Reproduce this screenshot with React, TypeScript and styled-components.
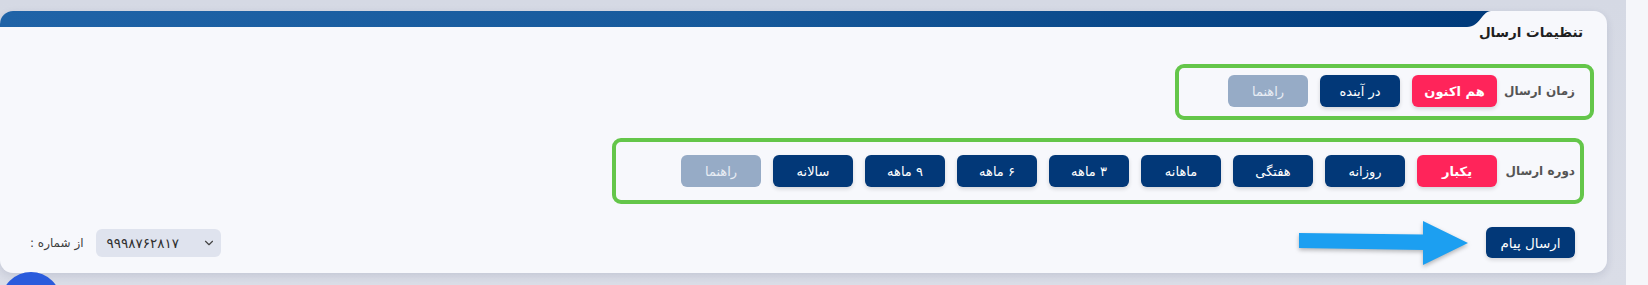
import React from "react";
import styled, { createGlobalStyle } from "styled-components";
import { ChevronDown } from "lucide-react";

const Global = createGlobalStyle`
  html, body {
    margin: 0;
    padding: 0;
    width: 1648px;
    height: 285px;
    overflow: hidden;
    background: #d8dbe5;
    font-family: "DejaVu Sans", "Noto Sans", sans-serif;
  }
  * { box-sizing: border-box; }
`;

const Page = styled.div`
  display: flex;
  width: 1648px;
  height: 285px;
  position: relative;
  overflow: hidden;
`;

const Main = styled.div`
  flex: 1;
  padding: 11px 19px 0 0;
  background: linear-gradient(180deg, #d5d9e4 0%, #dadde7 100%);
`;

const SideStrip = styled.div`
  width: 22px;
  background: #f5f6fa;
`;

const Card = styled.section`
  width: 1607px;
  height: 262px;
  background: #f7f8fc;
  border-radius: 13px;
  overflow: hidden;
  box-shadow: 0 3px 8px rgba(30, 40, 80, 0.12);
  display: flex;
  flex-direction: column;
  direction: rtl;
`;

const Header = styled.div`
  direction: ltr;
  display: flex;
  height: 16px;
`;

const HeaderBar = styled.div`
  flex: 1;
  background: linear-gradient(90deg, #1f63a7 0%, #175a9c 50%, #003b7c 100%);
`;

const HeaderTab = styled.div`
  width: 116px;
`;

const Title = styled.h2`
  margin: -2px 0 0;
  padding-right: 24px;
  font-size: 13.5px;
  line-height: 14px;
  font-weight: 700;
  color: #1f1f1f;
`;

const Highlight = styled.div<{ $w: number; $right: number; $pt: number; $pb: number; $pr: number }>`
  width: ${(p) => p.$w}px;
  margin-right: ${(p) => p.$right}px;
  padding: ${(p) => p.$pt}px ${(p) => p.$pr}px ${(p) => p.$pb}px 0;
  border: 4px solid #64c64a;
  border-radius: 9px;
  display: flex;
  align-items: center;
  gap: 12px;
`;

const Label = styled.span`
  width: 66px;
  flex-shrink: 0;
  white-space: nowrap;
  font-size: 12px;
  font-weight: 700;
  color: #555555;
`;

const Btn = styled.button<{ $kind: "primary" | "active" | "muted"; $w?: number }>`
  width: ${(p) => p.$w ?? 80}px;
  height: 32px;
  border: none;
  border-radius: 6px;
  padding: 0;
  font-family: inherit;
  font-size: 13px;
  font-weight: ${(p) => (p.$kind === "active" ? 700 : 400)};
  color: ${(p) => (p.$kind === "muted" ? "#e8edf4" : "#ffffff")};
  background: ${(p) =>
    p.$kind === "active" ? "#ff245a" : p.$kind === "muted" ? "#96abc6" : "#023878"};
  box-shadow: ${(p) => (p.$kind === "muted" ? "none" : "0 2px 4px rgba(0, 0, 0, 0.14)")};
  direction: rtl;
`;

const Row1 = styled.div`
  margin-top: 25px;
`;

const Row2 = styled.div`
  margin-top: 18px;
`;

const BottomRow = styled.div`
  margin-top: 23px;
  padding: 0 32px 0 30px;
  display: flex;
  align-items: center;
  justify-content: space-between;
`;

const SendGroup = styled.div`
  position: relative;
  display: flex;
`;

const SendBtn = styled(Btn)`
  height: 31px;
  font-size: 13.5px;
`;

const Arrow = styled.svg`
  position: absolute;
  right: calc(100% + 13px);
  top: -9px;
  filter: drop-shadow(0 2px 2px rgba(0, 0, 0, 0.28));
`;

const FromGroup = styled.div`
  direction: ltr;
  display: flex;
  align-items: center;
  gap: 12px;
`;

const FromLabel = styled.span`
  direction: rtl;
  white-space: nowrap;
  font-size: 12px;
  color: #3e3e3e;
`;

const Select = styled.div`
  width: 125px;
  height: 28px;
  border-radius: 6px;
  background: #dfe3ee;
  display: flex;
  align-items: center;
  justify-content: space-between;
  padding: 0 5px 0 11px;
  font-size: 13.5px;
  color: #2f2f2f;
`;

const Fab = styled.div`
  position: absolute;
  left: 1px;
  top: 272px;
  width: 60px;
  height: 60px;
  border-radius: 50%;
  background: #2a5bdc;
`;

const timeOptions = [
  { t: "هم اکنون", k: "active" as const },
  { t: "در آینده", k: "primary" as const },
  { t: "راهنما", k: "muted" as const },
];

const periodOptions = [
  { t: "یکبار", k: "active" as const },
  { t: "روزانه", k: "primary" as const },
  { t: "هفتگی", k: "primary" as const },
  { t: "ماهانه", k: "primary" as const },
  { t: "۳ ماهه", k: "primary" as const },
  { t: "۶ ماهه", k: "primary" as const },
  { t: "۹ ماهه", k: "primary" as const },
  { t: "سالانه", k: "primary" as const },
  { t: "راهنما", k: "muted" as const },
];

export default function App() {
  return (
    <>
      <Global />
      <Page>
        <Main>
          <Card>
            <Header>
              <HeaderBar />
              <svg width="24" height="16" viewBox="0 0 24 16">
                <path d="M0 0 H24 C15 0 13 16 0 16 Z" fill="#003b7c" />
              </svg>
              <HeaderTab />
            </Header>
            <Title>تنظیمات ارسال</Title>
            <Row1>
              <Highlight $w={419} $right={13} $pt={7} $pb={9} $pr={15}>
                <Label>زمان ارسال</Label>
                {timeOptions.map((o) => (
                  <Btn key={o.t} $kind={o.k} $w={o.k === "active" ? 85 : 80}>
                    {o.t}
                  </Btn>
                ))}
              </Highlight>
            </Row1>
            <Row2>
              <Highlight $w={972} $right={23} $pt={13} $pb={13} $pr={5}>
                <Label>دوره ارسال</Label>
                {periodOptions.map((o, i) => (
                  <Btn key={i} $kind={o.k}>
                    {o.t}
                  </Btn>
                ))}
              </Highlight>
            </Row2>
            <BottomRow>
              <SendGroup>
                <SendBtn $kind="primary" $w={89}>
                  ارسال پیام
                </SendBtn>
                <Arrow width="178" height="50" viewBox="0 0 178 50">
                  <polygon
                    points="4,15 128,16.5 128,3 173,25 128,47 128,32 4,30"
                    fill="#1c9ff1"
                  />
                </Arrow>
              </SendGroup>
              <FromGroup>
                <FromLabel>از شماره :</FromLabel>
                <Select>
                  <span>۹۹۹۸۷۶۲۸۱۷</span>
                  <ChevronDown size={14} strokeWidth={2} color="#444" />
                </Select>
              </FromGroup>
            </BottomRow>
          </Card>
        </Main>
        <SideStrip />
        <Fab />
      </Page>
    </>
  );
}
